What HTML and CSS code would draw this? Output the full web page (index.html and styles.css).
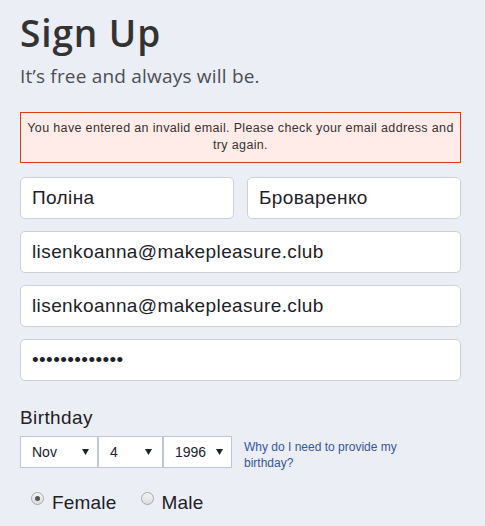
FILE: index.html
```html
<!DOCTYPE html>
<html lang="en">
<head>
<meta charset="utf-8">
<title>Sign Up</title>
<link rel="stylesheet" href="styles.css">
</head>
<body>
<main class="signup">
  <h1 class="title">Sign Up</h1>
  <p class="subtitle">It’s free and always will be.</p>
  <div class="error">You have entered an invalid email. Please check your email address and try again.</div>
  <form class="form">
    <div class="name-row">
      <input class="field" type="text" value="Поліна">
      <input class="field" type="text" value="Броваренко">
    </div>
    <input class="field" type="text" value="lisenkoanna@makepleasure.club">
    <input class="field" type="text" value="lisenkoanna@makepleasure.club">
    <input class="field" type="password" value="abcdefghijklm">
    <div class="label">Birthday</div>
    <div class="birthday-row">
      <div class="selects">
        <div class="select sel-month"><span>Nov</span><svg class="arrow" width="7" height="6" viewBox="0 0 7 6"><path d="M0 0H7L3.5 6Z" fill="#1d2129"/></svg></div>
        <div class="select sel-day"><span>4</span><svg class="arrow" width="7" height="6" viewBox="0 0 7 6"><path d="M0 0H7L3.5 6Z" fill="#1d2129"/></svg></div>
        <div class="select sel-year"><span>1996</span><svg class="arrow" width="7" height="6" viewBox="0 0 7 6"><path d="M0 0H7L3.5 6Z" fill="#1d2129"/></svg></div>
      </div>
      <a class="why" href="#">Why do I need to provide my birthday?</a>
    </div>
    <div class="gender-row">
      <label class="gender"><input class="radio" type="radio" name="sex" checked><span>Female</span></label>
      <label class="gender"><input class="radio" type="radio" name="sex"><span>Male</span></label>
    </div>
  </form>
</main>
</body>
</html>
```
FILE: styles.css
```css
* { box-sizing: border-box; }
html, body {
  margin: 0;
  padding: 0;
  background: #ebeef4;
  height: 100%;
  overflow: hidden;
}
body {
  font-family: "Liberation Sans", Arial, sans-serif;
  color: #1d2129;
}
.signup {
  width: 441px;
  margin-left: 20px;
  padding-top: 11px;
}
.title {
  margin: 0;
  font-family: "Open Sans", sans-serif;
  font-weight: 600;
  font-size: 37px;
  line-height: 44px;
  color: #333;
  letter-spacing: 0.9px;
}
.subtitle {
  margin: 9px 0 0;
  font-family: "Open Sans", sans-serif;
  font-size: 19px;
  line-height: 24px;
  color: #4b4f56;
  letter-spacing: 0.2px;
}
.error {
  margin-top: 24px;
  background: #ffebe8;
  border: 1px solid #dd3c10;
  padding: 7px 5px 8px;
  font-size: 12.5px;
  line-height: 17px;
  letter-spacing: 0.35px;
  color: #333;
  text-align: center;
}
.form {
  margin-top: 14px;
  display: flex;
  flex-direction: column;
  gap: 12px;
}
.name-row {
  display: flex;
  gap: 13px;
}
.field {
  display: block;
  width: 100%;
  height: 42px;
  margin: 0;
  border: 1px solid #ccd0d5;
  border-radius: 5px;
  background: #fff;
  padding: 0 11px;
  font-family: "Liberation Sans", Arial, sans-serif;
  font-size: 19px;
  letter-spacing: 0.4px;
  color: #1d2129;
  outline: none;
}
.label {
  margin-top: 14px;
  font-size: 19px;
  line-height: 22px;
  letter-spacing: 0.4px;
  color: #1d2129;
}
.birthday-row {
  margin-top: -5px;
  display: flex;
  align-items: flex-start;
}
.selects {
  display: flex;
}
.select {
  height: 32px;
  border: 1px solid #bdc7d8;
  background: #fff;
  display: flex;
  align-items: center;
  justify-content: space-between;
  padding: 0 8px 0 11px;
  font-size: 14px;
  color: #1d2129;
}
.sel-month { width: 78px; }
.sel-day { width: 65px; padding-right: 10px; }
.sel-year { width: 69px; }
.arrow { display: block; margin-top: -1px; }
.why {
  margin: 3px 0 0 12px;
  width: 165px;
  font-size: 12px;
  line-height: 16px;
  color: #365899;
  text-decoration: none;
}
.gender-row {
  margin-top: 9px;
  display: flex;
  padding-left: 11px;
  gap: 24px;
}
.gender {
  display: flex;
  align-items: flex-start;
  gap: 8px;
  font-size: 19px;
  line-height: 22px;
  letter-spacing: 0.2px;
  color: #1d2129;
}
.radio {
  appearance: none;
  -webkit-appearance: none;
  margin: 0;
  width: 13px;
  height: 13px;
  border-radius: 50%;
  border: 1px solid #a9a9a9;
  background: linear-gradient(#f4f4f4, #dcdcdc);
  position: relative;
}
.radio:checked::after {
  content: "";
  position: absolute;
  left: 3px;
  top: 3px;
  width: 5px;
  height: 5px;
  border-radius: 50%;
  background: #555;
}
```
